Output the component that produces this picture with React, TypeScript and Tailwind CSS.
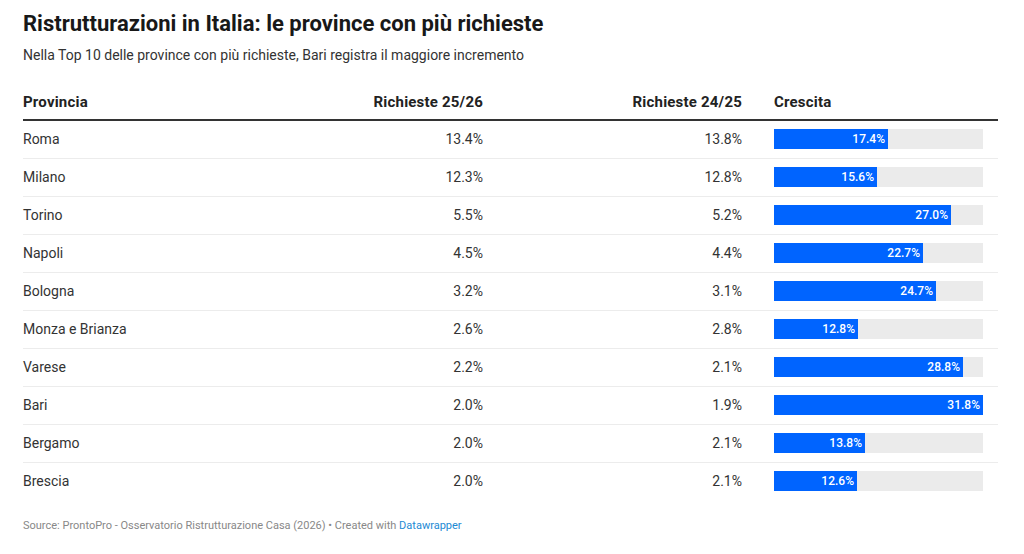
import React from "react";

const rows = [
  { p: "Roma", a: "13.4%", b: "13.8%", g: 17.4 },
  { p: "Milano", a: "12.3%", b: "12.8%", g: 15.6 },
  { p: "Torino", a: "5.5%", b: "5.2%", g: 27.0 },
  { p: "Napoli", a: "4.5%", b: "4.4%", g: 22.7 },
  { p: "Bologna", a: "3.2%", b: "3.1%", g: 24.7 },
  { p: "Monza e Brianza", a: "2.6%", b: "2.8%", g: 12.8 },
  { p: "Varese", a: "2.2%", b: "2.1%", g: 28.8 },
  { p: "Bari", a: "2.0%", b: "1.9%", g: 31.8 },
  { p: "Bergamo", a: "2.0%", b: "2.1%", g: 13.8 },
  { p: "Brescia", a: "2.0%", b: "2.1%", g: 12.6 },
];

const MAX = 31.8;
const BAR_W = 209;

export default function App() {
  return (
    <div
      className="w-[1024px] h-[554px] bg-white px-[23px] pt-[11px] text-[#333]"
      style={{ fontFamily: "Roboto, 'Liberation Sans', sans-serif" }}
    >
      <h1 className="text-[22px] leading-[26px] font-bold text-[#181818]">
        Ristrutturazioni in Italia: le province con più richieste
      </h1>
      <p className="mt-[8px] text-[14px] leading-[20px] text-[#333]">
        Nella Top 10 delle province con più richieste, Bari registra il maggiore incremento
      </p>
      <div className="mt-[27px] w-[975px]">
        <div className="grid grid-cols-[240px_220px_259px_256px] border-b-2 border-[#333] pb-[7px] text-[15px] leading-[20px] font-bold tracking-[0.2px] text-[#222]">
          <div>Provincia</div>
          <div className="text-right">Richieste 25/26</div>
          <div className="text-right">Richieste 24/25</div>
          <div className="pl-[32px]">Crescita</div>
        </div>
        {rows.map((r, i) => (
          <div
            key={r.p}
            className={
              "grid grid-cols-[240px_220px_259px_256px] h-[38px] pb-[1px] items-center border-b text-[14px] leading-[20px] text-[#333] " +
              (i < rows.length - 1 ? "border-[#ececec]" : "border-transparent")
            }
          >
            <div>{r.p}</div>
            <div className="text-right">{r.a}</div>
            <div className="text-right">{r.b}</div>
            <div className="pl-[32px]">
              <div className="w-[209px] h-[20px] bg-[#ebebeb]">
                <div
                  className="h-[20px] bg-[#0064ff] flex items-center justify-end pr-[3px] text-[12px] font-medium text-white"
                  style={{ width: `${Math.round((r.g / MAX) * BAR_W)}px` }}
                >
                  {r.g.toFixed(1)}%
                </div>
              </div>
            </div>
          </div>
        ))}
      </div>
      <div className="mt-[18px] text-[11px] leading-[14px] text-[#888]">
        Source: ProntoPro - Osservatorio Ristrutturazione Casa (2026) • Created with{" "}
        <span className="text-[#1d8ad4]">Datawrapper</span>
      </div>
    </div>
  );
}
